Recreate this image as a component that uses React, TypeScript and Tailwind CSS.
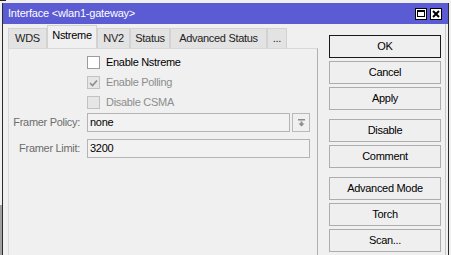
import { ReactNode } from "react";

const tabs = [
  { label: "WDS", w: "w-[39px]" },
  { label: "Nstreme", w: "w-[50px]", active: true },
  { label: "NV2", w: "w-[33px]" },
  { label: "Status", w: "w-[40px]" },
  { label: "Advanced Status", w: "w-[97px]" },
  { label: "...", w: "w-[20px]" },
];

function Button({ children, primary }: { children: ReactNode; primary?: boolean }) {
  return (
    <div
      className={`flex h-[23px] items-center justify-center border bg-[#efefef] text-black ${
        primary ? "border-[#1a1a1a]" : "border-[#adadad]"
      }`}
    >
      {children}
    </div>
  );
}

function Check({ label, checked, disabled }: { label: string; checked?: boolean; disabled?: boolean }) {
  return (
    <div className="flex h-[13px] items-center gap-[6px]">
      <div
        className={`flex h-[13px] w-[13px] items-center justify-center border ${
          disabled ? "border-[#c2c2c2] bg-[#e6e6e6]" : "border-[#9c9c9c] bg-white"
        }`}
      >
        {checked && (
          <svg width="9" height="8" viewBox="0 0 9 8">
            <path d="M1 4 L3.5 6.5 L8 1.5" fill="none" stroke="#8c8c8c" strokeWidth="1.6" />
          </svg>
        )}
      </div>
      <span className={disabled ? "text-[#8d8d8d]" : "text-black"}>{label}</span>
    </div>
  );
}

export default function App() {
  return (
    <div
      className="flex h-[255px] w-[451px] flex-col overflow-hidden bg-[#f0f0f0] text-[11px] leading-none tracking-[-0.3px]"
      style={{ fontFamily: '"Liberation Sans", Arial, sans-serif' }}
    >
      <div className="flex h-[3px]">
        <div className="h-[1px] w-[6px] bg-[#222]" />
      </div>
      <div className="flex flex-1">
        <div className="flex w-[2px] flex-col">
          <div className="h-[202px]" />
          <div className="flex-1 bg-[#a0a0a0]" />
        </div>
        <div className="flex w-[447px] flex-col border-l border-r border-[#2a2a2a]">
          {/* title bar */}
          <div className="flex h-[21px] items-center bg-[#5b5bd3] pl-[5px] pr-[6px] text-white">
            <span className="flex-1 tracking-[-0.2px]">Interface &lt;wlan1-gateway&gt;</span>
            <div className="flex gap-[3px]">
              <div className="flex h-[12px] w-[12px] items-center justify-center border border-black bg-white">
                <svg width="8" height="7" viewBox="0 0 8 7">
                  <rect x="0.5" y="0.5" width="7" height="6" fill="none" stroke="#000" />
                  <rect x="0" y="0" width="8" height="2" fill="#000" />
                </svg>
              </div>
              <div className="flex h-[12px] w-[12px] items-center justify-center border border-black bg-white">
                <svg width="8" height="8" viewBox="0 0 8 8">
                  <path d="M1 1 L7 7 M7 1 L1 7" stroke="#000" strokeWidth="2" />
                </svg>
              </div>
            </div>
          </div>

          {/* body */}
          <div className="flex flex-1 pl-[5px]">
            <div className="flex w-[310px] flex-col pt-[1px]">
              <div className="flex h-[23px] items-end">
                {tabs.map((t) =>
                  t.active ? (
                    <div
                      key={t.label}
                      className={`${t.w} -mb-[1px] flex h-[24px] items-center justify-center border border-b-0 border-[#d2d2d2] bg-[#f0f0f0] pb-[4px] text-black`}
                    >
                      {t.label}
                    </div>
                  ) : (
                    <div
                      key={t.label}
                      className={`${t.w} flex h-[20px] items-center justify-center border border-b-0 border-[#d2d2d2] bg-[#e3e3e3] text-[#222]`}
                    >
                      {t.label}
                    </div>
                  )
                )}
              </div>
              <div className="flex flex-1 flex-col border-l border-r border-t border-[#d9d9d9] border-r-[#b0b0b0] pt-[7px]">
                <div className="flex flex-col gap-[7px] pl-[78px]">
                  <Check label="Enable Nstreme" />
                  <Check label="Enable Polling" checked disabled />
                  <Check label="Disable CSMA" disabled />
                </div>
                <div className="mt-[4px] flex h-[19px] items-center">
                  <span className="w-[71px] text-right text-[#6d6d6d]">Framer Policy:</span>
                  <div className="ml-[7px] flex h-[19px] w-[203px] items-center border border-[#b4b4b4] bg-[#f2f2f2] pl-[2px] text-black">
                    none
                  </div>
                  <div className="ml-[2px] flex h-[19px] w-[18px] items-center justify-center border border-[#b9b9b9] bg-[#f0f0f0]">
                    <svg width="7" height="8" viewBox="0 0 7 8">
                      <rect x="0" y="0" width="7" height="1.5" fill="#8a8a8a" />
                      <path d="M2.5 2.5 H4.5 V4.5 H6.5 L3.5 7.5 L0.5 4.5 H2.5 Z" fill="#8a8a8a" />
                    </svg>
                  </div>
                </div>
                <div className="mt-[7px] flex h-[19px] items-center">
                  <span className="w-[71px] text-right text-[#6d6d6d]">Framer Limit:</span>
                  <div className="ml-[7px] flex h-[19px] w-[223px] items-center border border-[#b4b4b4] bg-[#f2f2f2] pl-[2px] text-black">
                    3200
                  </div>
                </div>
              </div>
            </div>

            {/* buttons */}
            <div className="ml-[11px] flex w-[112px] flex-col pt-[11px]">
              <div className="flex flex-col gap-[3px]">
                <Button primary>OK</Button>
                <Button>Cancel</Button>
                <Button>Apply</Button>
              </div>
              <div className="mt-[9px] flex flex-col gap-[3px]">
                <Button>Disable</Button>
                <Button>Comment</Button>
              </div>
              <div className="mt-[9px] flex flex-col gap-[3px]">
                <Button>Advanced Mode</Button>
                <Button>Torch</Button>
                <Button>Scan...</Button>
              </div>
            </div>
            <div className="ml-[4px] w-[1px] bg-[#c8c8c8]" />
          </div>
        </div>
      </div>
    </div>
  );
}
